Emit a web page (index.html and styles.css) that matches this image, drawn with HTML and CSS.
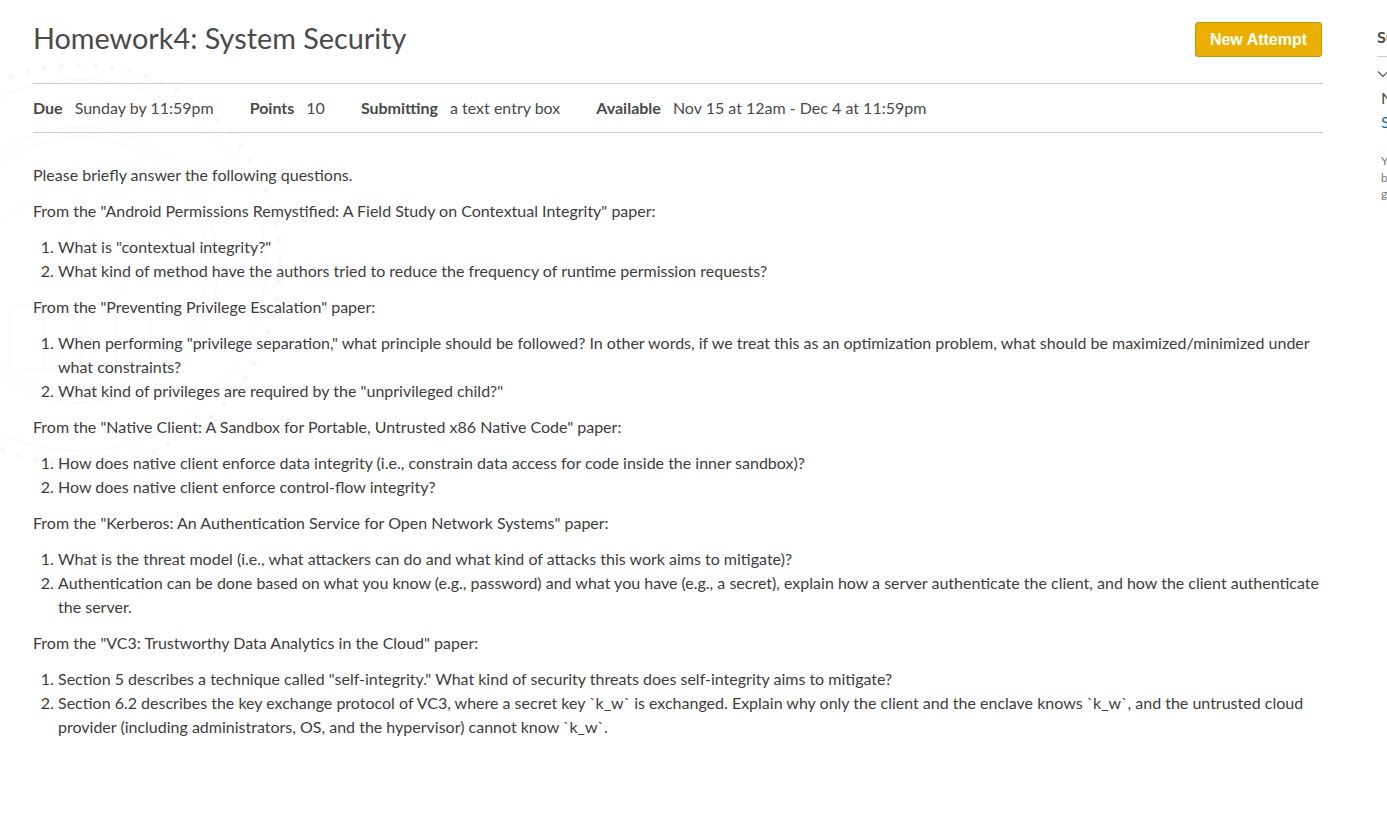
FILE: index.html
```html
<!DOCTYPE html>
<html lang="en">
<head>
<meta charset="utf-8">
<title>Homework4: System Security</title>
<link rel="stylesheet" href="styles.css">
</head>
<body>
<svg class="seal" width="440" height="440" viewBox="-220 -220 440 440" aria-hidden="true">
  <circle r="200" fill="none" stroke="#4d7fb3" stroke-width="5" stroke-dasharray="0.1 17" stroke-linecap="round"/>
  <circle r="186" fill="none" stroke="#4d7fb3" stroke-width="1"/>
  <circle r="138" fill="none" stroke="#4d7fb3" stroke-width="1"/>
  <circle r="128" fill="none" stroke="#4d7fb3" stroke-width="1"/>
  <path d="M -70 40 L 70 40 L 70 105 L -70 105 Z M -35 40 L -35 105 M 0 40 L 0 105 M 35 40 L 35 105" fill="none" stroke="#4d7fb3" stroke-width="1"/>
  <path d="M 0 -70 L 28 0 L -28 0 Z" fill="none" stroke="#4d7fb3" stroke-width="1"/>
  <path d="M -110 -20 Q -60 -60 0 -95 Q 60 -60 110 -20" fill="none" stroke="#4d7fb3" stroke-width="1"/>
</svg>
<div class="layout">
  <main class="content">
    <header class="header">
      <h1 class="title">Homework4: System Security</h1>
      <button class="btn-attempt" type="button">New Attempt</button>
    </header>
    <div class="meta">
      <div class="meta-item"><span class="meta-label">Due</span><span class="meta-value">Sunday by 11:59pm</span></div>
      <div class="meta-item"><span class="meta-label">Points</span><span class="meta-value">10</span></div>
      <div class="meta-item"><span class="meta-label">Submitting</span><span class="meta-value">a text entry box</span></div>
      <div class="meta-item"><span class="meta-label">Available</span><span class="meta-value">Nov 15 at 12am - Dec 4 at 11:59pm</span></div>
    </div>
    <div class="description">
      <p>Please briefly answer the following questions.</p>
      <p>From the "Android Permissions Remystified: A Field Study on Contextual Integrity" paper:</p>
      <ol>
        <li>What is "contextual integrity?"</li>
        <li>What kind of method have the authors tried to reduce the frequency of runtime permission requests?</li>
      </ol>
      <p>From the "Preventing Privilege Escalation" paper:</p>
      <ol>
        <li>When performing "privilege separation," what principle should be followed? In other words, if we treat this as an optimization problem, what should be maximized/minimized under what constraints?</li>
        <li>What kind of privileges are required by the "unprivileged child?"</li>
      </ol>
      <p>From the "Native Client: A Sandbox for Portable, Untrusted x86 Native Code" paper:</p>
      <ol>
        <li>How does native client enforce data integrity (i.e., constrain data access for code inside the inner sandbox)?</li>
        <li>How does native client enforce control-flow integrity?</li>
      </ol>
      <p>From the "Kerberos: An Authentication Service for Open Network Systems" paper:</p>
      <ol>
        <li>What is the threat model (i.e., what attackers can do and what kind of attacks this work aims to mitigate)?</li>
        <li>Authentication can be done based on what you know (e.g., password) and what you have (e.g., a secret), explain how a server authenticate the client, and how the client authenticate the server.</li>
      </ol>
      <p>From the "VC3: Trustworthy Data Analytics in the Cloud" paper:</p>
      <ol>
        <li>Section 5 describes a technique called "self-integrity." What kind of security threats does self-integrity aims to mitigate?</li>
        <li>Section 6.2 describes the key exchange protocol of VC3, where a secret key `k_w` is exchanged. Explain why only the client and the enclave knows `k_w`, and the untrusted cloud provider (including administrators, OS, and the hypervisor) cannot know `k_w`.</li>
      </ol>
    </div>
  </main>
  <aside class="sidebar">
    <h2 class="side-title">Submission</h2>
    <div class="side-toggle">
      <svg width="12" height="8" viewBox="0 0 12 8" aria-hidden="true"><path d="M1 1.5 L6 6.5 L11 1.5" fill="none" stroke="#555" stroke-width="1.2"/></svg>
      <span>Submission Details</span>
    </div>
    <div class="side-status">Not Graded</div>
    <a class="side-link" href="#">Submission Details</a>
    <p class="side-note">You may not see all comments right now because the assignment is currently being graded.</p>
  </aside>
</div>
</body>
</html>
```

FILE: styles.css
```css
html, body {
  margin: 0;
  padding: 0;
  background: #ffffff;
  overflow: hidden;
}

body {
  font-family: Lato, "Noto Sans", "Liberation Sans", sans-serif;
  color: #2d3b45;
  position: relative;
  width: 1387px;
  height: 815px;
}

.seal {
  position: absolute;
  left: -140px;
  top: 45px;
  opacity: 0.05;
  pointer-events: none;
}

.layout {
  display: flex;
  position: relative;
}

.content {
  width: 1290px;
  margin-left: 33px;
  flex-shrink: 0;
}

.header {
  display: flex;
  justify-content: space-between;
  align-items: flex-start;
  height: 84px;
  border-bottom: 1px solid #c7cdd1;
  box-sizing: border-box;
}

.title {
  margin: 20px 0 0;
  font-size: 28.8px;
  font-weight: 400;
  line-height: 36px;
  color: #4a4a4a;
}

.btn-attempt {
  margin-top: 22px;
  margin-right: 1px;
  width: 127px;
  height: 35px;
  background: #ebaf00;
  border: 1px solid #c89600;
  border-radius: 3px;
  color: #ffffff;
  font-family: "Liberation Sans", Arial, sans-serif;
  font-weight: 700;
  font-size: 16px;
  padding: 0;
}

.meta {
  display: flex;
  gap: 36px;
  height: 49px;
  padding-bottom: 1px;
  align-items: center;
  border-bottom: 1px solid #c7cdd1;
  box-sizing: border-box;
  font-size: 16px;
  color: #4a4a4a;
}

.meta-item {
  display: flex;
  gap: 12px;
}

.meta-label {
  font-weight: 700;
}

.description {
  padding-top: 30px;
  font-size: 16px;
  line-height: 24px;
  color: #3d3d3d;
}

.description p {
  margin: 0 0 12px;
}

.description ol {
  margin: 0 0 12px;
  padding-left: 25px;
}

.sidebar {
  margin-left: 54px;
  width: 245px;
  flex-shrink: 0;
  color: #555;
}

.side-title {
  margin: 26px 0 0;
  font-size: 16px;
  font-weight: 700;
  line-height: 22px;
  padding-bottom: 8px;
  border-bottom: 1px solid #c7cdd1;
  color: #4a4a4a;
}

.side-toggle {
  display: flex;
  align-items: center;
  gap: 6px;
  margin-top: 8px;
  font-size: 14px;
  color: #555;
}

.side-status {
  margin-top: 4px;
  margin-left: 4px;
  font-size: 16px;
  line-height: 24px;
  color: #4a4a4a;
}

.side-link {
  display: block;
  margin-left: 4px;
  font-size: 16px;
  line-height: 24px;
  color: #0374b5;
  text-decoration: none;
}

.side-note {
  margin: 19px 0 0 4px;
  font-size: 12px;
  line-height: 16.5px;
  color: #777;
}
```
